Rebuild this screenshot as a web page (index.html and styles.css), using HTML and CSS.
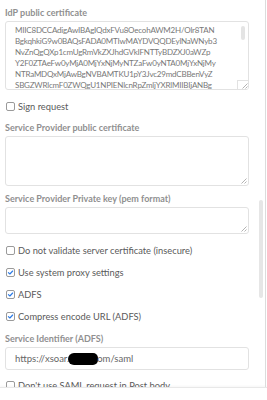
FILE: index.html
```html
<!DOCTYPE html>
<html lang="en">

<head>
    <meta charset="UTF-8">
    <meta name="viewport" content="width=device-width, initial-scale=1.0">
    <title>SAML settings</title>
    <link rel="stylesheet" href="styles.css">
</head>

<body>

    <div class="panel">
        <div class="form">

            <div class="field idp">
                <div class="label">IdP public certificate</div>
                <div class="textarea cert">
                    <div class="cert-text">MIIC8DCCAdigAwIBAgIQdxFVu8OecohAWM2H/Olr8TAN
BgkqhkiG9w0BAQsFADA0MTIwMAYDVQQDEylNaWNyb3
NvZnQgQXp1cmUgRmVkZXJhdGVkIFNTTyBDZXJ0aWZp
Y2F0ZTAeFw0yMjA0MjYxNjMyNTZaFw0yNTA0MjYxNjMy
NTRaMDQxMjAwBgNVBAMTKU1pY3Jvc29mdCBBenVyZ
SBGZWRlcmF0ZWQgU1NPIENlcnRpZmljYXRlMIIBIjANBg</div>
                    <span class="ta-thumb"></span>
                    <span class="ta-corner">
                        <svg width="7" height="7" viewBox="0 0 7 7"><path d="M6.5 1.5L1.5 6.5M6.5 4.5L4.5 6.5" stroke="#aaa" stroke-width="0.9"/></svg>
                    </span>
                </div>
            </div>

            <label class="check sign">
                <span class="box"></span>
                Sign request
            </label>

            <div class="field sp-cert-field">
                <div class="label">Service Provider public certificate</div>
                <div class="textarea sp-cert">
                    <span class="grip">
                        <svg width="7" height="7" viewBox="0 0 7 7"><path d="M6.5 1.5L1.5 6.5M6.5 4.5L4.5 6.5" stroke="#aaa" stroke-width="0.9"/></svg>
                    </span>
                </div>
            </div>

            <div class="field sp-key-field">
                <div class="label">Service Provider Private key (pem format)</div>
                <div class="textarea sp-key">
                    <span class="grip">
                        <svg width="7" height="7" viewBox="0 0 7 7"><path d="M6.5 1.5L1.5 6.5M6.5 4.5L4.5 6.5" stroke="#aaa" stroke-width="0.9"/></svg>
                    </span>
                </div>
            </div>

            <div class="checks">
                <label class="check">
                    <span class="box"></span>
                    Do not validate server certificate (insecure)
                </label>
                <label class="check">
                    <span class="box"><svg width="9" height="9" viewBox="0 0 9 9"><path d="M1.8 4.6L3.7 6.4L7.3 2.6" fill="none" stroke="#2d7be5" stroke-width="1.5" stroke-linecap="round" stroke-linejoin="round"/></svg></span>
                    Use system proxy settings
                </label>
                <label class="check">
                    <span class="box"><svg width="9" height="9" viewBox="0 0 9 9"><path d="M1.8 4.6L3.7 6.4L7.3 2.6" fill="none" stroke="#2d7be5" stroke-width="1.5" stroke-linecap="round" stroke-linejoin="round"/></svg></span>
                    ADFS
                </label>
                <label class="check">
                    <span class="box"><svg width="9" height="9" viewBox="0 0 9 9"><path d="M1.8 4.6L3.7 6.4L7.3 2.6" fill="none" stroke="#2d7be5" stroke-width="1.5" stroke-linecap="round" stroke-linejoin="round"/></svg></span>
                    Compress encode URL (ADFS)
                </label>
            </div>

            <div class="field service-id">
                <div class="label">Service Identifier (ADFS)</div>
                <div class="input">https://xsoar.<span class="redacted"></span>om/saml</div>
            </div>

            <label class="check last">
                <span class="box"></span>
                Don't use SAML request in Post body
            </label>

        </div>
        <span class="scroll-thumb"></span>
    </div>

    <div class="footer">
        <label class="check">
            <span class="box"></span>
        </label>
    </div>

</body>

</html>
```

FILE: styles.css
```css
* {
    margin: 0;
    padding: 0;
    box-sizing: border-box;
}

body {
    font-family: 'Lato', 'Noto Sans', sans-serif;
    background: #fff;
    color: #555;
    width: 267px;
    height: 400px;
    overflow: hidden;
}

.panel {
    position: relative;
    height: 387px;
    overflow: hidden;
    border-right: 1px solid #dcdcdc;
    width: 266px;
}

.form {
    padding: 6px 17px 0 5px;
}

.label {
    font-size: 9px;
    line-height: 13px;
    font-weight: 700;
    color: #909090;
    margin-bottom: 2px;
}

.textarea {
    position: relative;
    width: 244px;
    border: 1px solid #e2e2e2;
    border-radius: 3px;
    background: #fff;
}

.cert {
    height: 69px;
    overflow: hidden;
    padding: 3px 0 0 9px;
}

.cert-text {
    white-space: pre;
    font-size: 8px;
    letter-spacing: -0.2px;
    line-height: 11px;
    color: #787878;
}

.ta-thumb {
    position: absolute;
    top: 4px;
    right: 3px;
    width: 4px;
    height: 14px;
    border-radius: 2px;
    background: #e4e4e4;
}

.ta-corner {
    position: absolute;
    right: 0;
    bottom: 0;
    width: 11px;
    height: 9px;
    background: #fff;
    border-left: 1px solid #e2e2e2;
    border-top: 1px solid #e2e2e2;
    display: flex;
    align-items: flex-end;
    justify-content: flex-end;
}

.ta-corner svg,
.grip svg {
    display: block;
}

.grip {
    position: absolute;
    right: 1px;
    bottom: 1px;
}

.sp-cert {
    height: 50px;
}

.sp-key {
    height: 27px;
}

.check {
    display: flex;
    align-items: center;
    gap: 3px;
    height: 14px;
    font-size: 9.3px;
    color: #5a5a5a;
}

.check.sign {
    margin-top: 9px;
}

.sp-cert-field {
    margin-top: 8px;
}

.sp-key-field {
    margin-top: 6px;
}

.box {
    width: 9px;
    height: 9px;
    border: 1px solid #9a9a9a;
    border-radius: 2px;
    flex-shrink: 0;
    display: flex;
    align-items: center;
    justify-content: center;
    margin-left: 1px;
}

.box svg {
    display: block;
}

.checks {
    display: flex;
    flex-direction: column;
    gap: 8.3px;
    margin-top: 9px;
}

.service-id {
    margin-top: 8.5px;
}

.input {
    width: 244px;
    height: 23px;
    border: 1px solid #e2e2e2;
    border-radius: 3px;
    padding-left: 9px;
    font-size: 9.5px;
    color: #666;
    display: flex;
    align-items: center;
}

.redacted {
    display: inline-block;
    width: 30px;
    height: 12px;
    border-radius: 6px 5px 5px 6px;
    background: #000;
    margin: 0 -1px;
}

.check.last {
    margin-top: 8.5px;
}

.scroll-thumb {
    position: absolute;
    left: 259px;
    top: 200px;
    width: 4px;
    height: 98px;
    border-radius: 2px;
    background: #e6e6e6;
}

.footer {
    border-top: 1px solid #e8e8e8;
    box-shadow: 0 -1px 2px rgba(0, 0, 0, 0.04);
    padding: 10px 5px 0;
    height: 13px;
}
```
